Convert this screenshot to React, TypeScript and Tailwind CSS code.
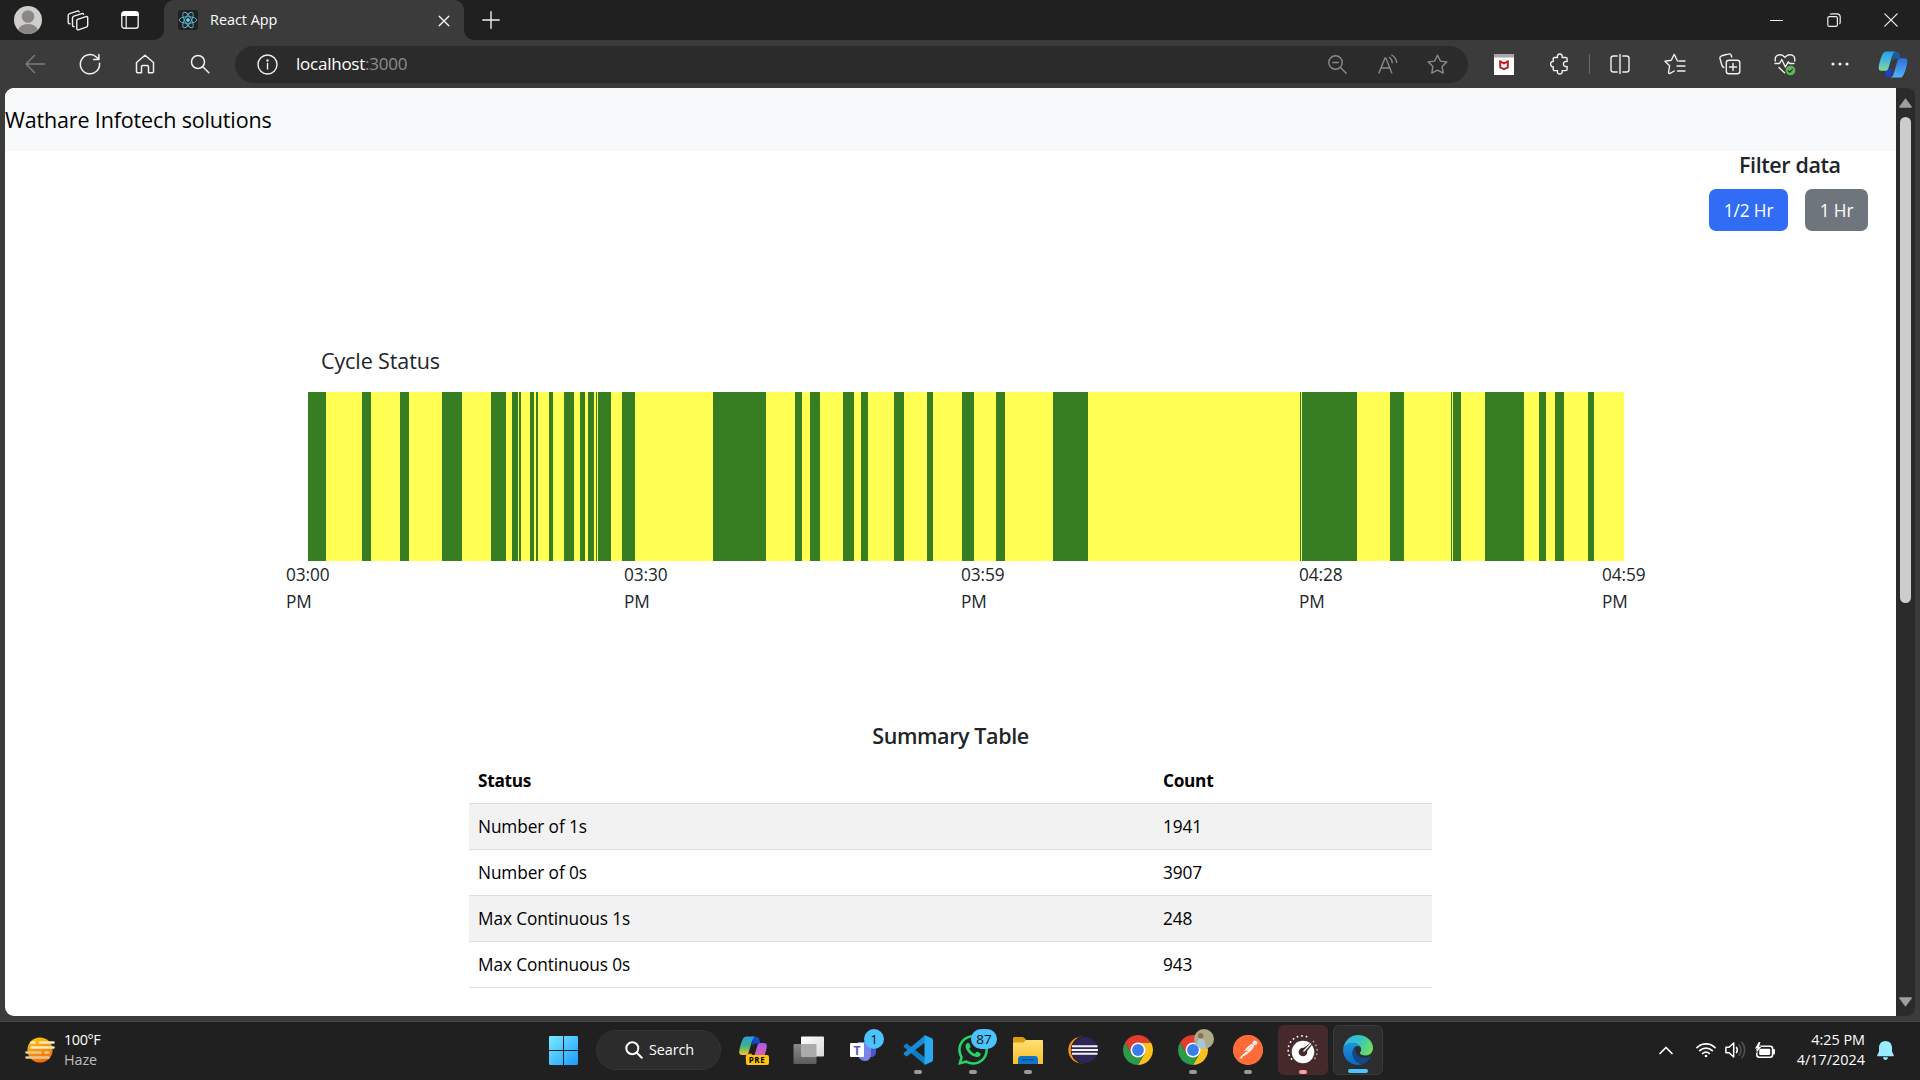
import { type ReactNode } from "react";
import { SiPostman, SiWhatsapp } from "react-icons/si";

const runs: [number, number][] = [
  [308, 326], [362, 371], [400, 409], [442, 462], [491, 506], [512, 518], [519, 521], [530, 534],
  [536, 538], [549, 553], [564, 574], [580, 585], [588, 594], [596, 597], [598, 611], [622, 635],
  [713, 766], [795, 802], [810, 820], [843, 854], [861, 868], [894, 904], [927, 933], [962, 974],
  [996, 1005], [1053, 1088], [1300, 1301], [1302, 1357], [1390, 1404], [1451, 1452], [1453, 1461],
  [1485, 1524], [1539, 1546], [1555, 1564], [1588, 1594],
];
const START = 308;
const END = 1624;

const summary = [
  ["Number of 1s", "1941"],
  ["Number of 0s", "3907"],
  ["Max Continuous 1s", "248"],
  ["Max Continuous 0s", "943"],
];

function T({ children, className = "" }: { children: ReactNode; className?: string }) {
  return <span className={`inline-block whitespace-nowrap ${className}`}>{children}</span>;
}

function Line({ children, w = 22, h = w, sw = 1.4, c = "#f0f0f0" }: { children: ReactNode; w?: number; h?: number; sw?: number; c?: string }) {
  return (
    <svg width={w} height={h} viewBox={`0 0 ${w} ${h}`} fill="none" stroke={c} strokeWidth={sw} strokeLinecap="round" strokeLinejoin="round" className="block shrink-0">
      {children}
    </svg>
  );
}

function ToolSlot({ children }: { children: ReactNode }) {
  return <div className="flex h-full w-[55px] shrink-0 items-center justify-center">{children}</div>;
}

function CopilotMark({ w, h, a = "c" }: { w: number; h: number; a?: string }) {
  const warm = a === "w";
  return (
    <svg width={w} height={h} viewBox="0 0 30 28" className="block shrink-0">
      <defs>
        <linearGradient id={`${a}1`} x1="0" y1="0" x2="0" y2="1">
          <stop offset="0" stopColor="#2b9fe6" />
          <stop offset=".5" stopColor={warm ? "#3bb28a" : "#4cb8d8"} />
          <stop offset="1" stopColor={warm ? "#f5c928" : "#7fdc8e"} />
        </linearGradient>
        <linearGradient id={`${a}2`} x1="0" y1="0" x2="0" y2="1">
          <stop offset="0" stopColor={warm ? "#a45cf0" : "#2f6fdc"} />
          <stop offset="1" stopColor={warm ? "#f5668b" : "#4fb4fb"} />
        </linearGradient>
      </defs>
      <path d="M14 1h5c2 0 2.600 1.500 3.200 3.500L23 8h-5c-2 0-3 1-3.500 3z" fill={warm ? "#1748c8" : "#1d5c9c"} />
      <path d="M8 19h6l-1 5c-.5 2-1 3.500-3 3.500-2 0-2.500-2-3-4z" fill={warm ? "#f0a51e" : "#1c3fd8"} />
      <path d="M8 .5h10c-2.500.5-3.300 2.500-4 5l-3.500 11.500C9.800 19.500 9 20.500 6.500 20.500H3c-2.500 0-3.300-2-2.700-5C1 11 2.500 6.500 4 3.500 5 1.500 6 .5 8 .5z" fill={`url(#${a}1)`} />
      <path d="M22 27.500H12c2.500-.5 3.300-2.500 4-5L19.500 11c.7-2.500 1.500-3.500 4-3.500H27c2.500 0 3.300 2 2.700 5-.7 4.500-2.200 9-3.700 12-1 2-2 3-4 3z" fill={`url(#${a}2)`} />
    </svg>
  );
}

function Chrome() {
  return (
    <svg width="30" height="30" viewBox="0 0 30 30" className="block">
      <path d="M27.990 7.500A15 15 0 0 1 15 30L21.500 18.750 15 7.500z" fill="#fcc21b" />
      <path d="M2.010 7.500A15 15 0 0 1 27.990 7.500H15L8.500 18.750z" fill="#e33b2e" />
      <path d="M2.010 7.500A15 15 0 0 0 15 30L21.500 18.750h-13z" fill="#2c9a48" />
      <circle cx="15" cy="15" r="7.500" fill="#fff" />
      <circle cx="15" cy="15" r="5.900" fill="#3b7ded" />
    </svg>
  );
}

function Edge() {
  return (
    <svg width="30" height="30" viewBox="0 0 30 30" className="block">
      <defs>
        <linearGradient id="eg1" x1="0" y1=".2" x2="1" y2=".6">
          <stop offset="0" stopColor="#2fb3ea" />
          <stop offset=".5" stopColor="#35c3c4" />
          <stop offset="1" stopColor="#6fe05a" />
        </linearGradient>
        <linearGradient id="eg2" x1="0" y1="0" x2="0" y2="1">
          <stop offset="0" stopColor="#1b95e0" />
          <stop offset="1" stopColor="#0f66bd" />
        </linearGradient>
      </defs>
      <path d="M0 14C1.500 5.500 7.500 0 15 0c8.500 0 15 6 15 13 0 4.500-3.300 7.500-7.500 7.500-3.500 0-5.500-1.200-5.500-2.500 0-1 1.200-1.500 1.200-3.500 0-3.500-3.700-6.500-8.700-6.500C5 8 1.500 10.500 0 14z" fill="url(#eg1)" />
      <path d="M0 14.500C1.200 10.500 5 8 9.500 8c5 0 8.700 3 8.700 6 0-1.700-1.500-3-3.500-3-3 0-5.200 3-5.200 7 0 6 4.500 10.500 10 11-1.500.6-3 1-4.500 1C6.500 30 0 23 0 14.500z" fill="url(#eg2)" />
      <path d="M12 12c-1.500 1.200-2.500 3.400-2.500 6 0 6 4.700 10.500 10.500 10.900 3.500-1.400 6-3.700 7.800-6.600.3-.6-.2-1-.8-.7-1.500.8-3 1.200-5 1.200-5.500 0-10-3.500-10-7.800 0-1.200.300-2.200 0-3z" fill="#114a8b" />
    </svg>
  );
}

function TaskSlot({ children, mark, tile = "" }: { children: ReactNode; mark?: string; tile?: string }) {
  return (
    <div className="flex w-[55px] shrink-0 justify-center">
      <div className={`relative flex h-[50px] w-[50px] items-center justify-center rounded-md ${tile}`}>
        {children}
        {mark && <div className={`absolute bottom-px h-1 rounded-full ${mark}`} />}
      </div>
    </div>
  );
}

function TabStrip() {
  return (
    <div className="flex h-10 bg-[#202020]">
      <div className="flex w-[152px] items-center pl-[14px]">
        <svg width="28" height="28" viewBox="0 0 28 28" className="block">
          <clipPath id="av"><circle cx="14" cy="14" r="14" /></clipPath>
          <g clipPath="url(#av)">
            <rect width="28" height="28" fill="#d0ceca" />
            <circle cx="14" cy="10.500" r="6.300" fill="#8a8886" />
            <ellipse cx="14" cy="25" rx="10" ry="7" fill="#8a8886" />
          </g>
        </svg>
        <div className="ml-[25px]">
          <Line w={22} h={21} sw={1.400}>
            <path d="M10.500 9.300 19 6.600c1-.3 1.700.1 1.700 1.200v7.400c0 1-.4 1.600-1.400 1.900L12 19.700c-1.200.4-2.200 0-2.200-1.300v-8c0-.6.2-.9.7-1.100z" />
            <path d="M7.200 16.600c-1.200.1-1.700-.5-1.700-1.500V8c0-1 .5-1.600 1.400-1.900l8-2.500c.9-.3 1.400 0 1.600.8" />
            <path d="M3 13.700c-1.200.1-1.800-.5-1.800-1.500V5.500c0-1 .5-1.600 1.400-1.900l7.800-2.500c1-.3 1.500 0 1.700.8" />
          </Line>
        </div>
        <svg width="18" height="18" viewBox="0 0 18 18" className="ml-8 block">
          <rect x=".8" y=".8" width="16.400" height="16.400" rx="2.500" fill="none" stroke="#e8e8e8" strokeWidth="1.400" />
          <path d="M.5 5V3A2.500 2.500 0 0 1 3 .5h12A2.500 2.500 0 0 1 17.500 3v2z" fill="#fff" />
          <path d="M5.200 5v12" stroke="#e8e8e8" strokeWidth="1.300" />
        </svg>
      </div>
      <div className="flex w-3 items-end bg-[#3b3b3b]"><div className="h-10 w-3 rounded-br-[10px] bg-[#202020]" /></div>
      <div className="flex w-[300px] bg-[#202020]">
        <div className="flex w-full items-center rounded-t-[10px] bg-[#3b3b3b] pl-[14px]">
          <div className="flex h-5 w-5 items-center justify-center rounded-[3px] bg-[#202020]">
            <svg width="20" height="20" viewBox="0 0 20 20" fill="none" stroke="#5fb9d6" strokeWidth=".9" className="block">
              <ellipse cx="10" cy="10" rx="8.800" ry="3.300" />
              <ellipse cx="10" cy="10" rx="8.800" ry="3.300" transform="rotate(60 10 10)" />
              <ellipse cx="10" cy="10" rx="8.800" ry="3.300" transform="rotate(120 10 10)" />
              <circle cx="10" cy="10" r="1.500" fill="#7fd8f5" />
            </svg>
          </div>
          <T className="ml-3 text-[14.400px] text-white">React App</T>
          <div className="mt-px mr-[14px] ml-auto">
            <Line w={12} sw={1.400}><path d="M1.200 1.200l9.600 9.600M10.800 1.200l-9.600 9.600" /></Line>
          </div>
        </div>
      </div>
      <div className="flex w-3 items-end bg-[#3b3b3b]"><div className="h-10 w-3 rounded-bl-[10px] bg-[#202020]" /></div>
      <div className="ml-[6px] flex items-center">
        <Line w={18} sw={1.400}><path d="M9 .8v16.400M.8 9h16.400" /></Line>
      </div>
      <div className="ml-auto flex items-center">
        <div className="flex w-[57px] justify-center"><div className="h-px w-[13px] bg-white" /></div>
        <div className="flex w-[57px] justify-center">
          <Line w={14} sw={1.200}><path d="M.8 5.200c0-1 .5-1.600 1.500-1.600h6.500c1 0 1.600.6 1.600 1.600v6.600c0 1-.6 1.600-1.600 1.600H2.300c-1 0-1.500-.6-1.500-1.600zM3.400 1.200C3.800.8 4.300.8 5 .8h5c2.200 0 3.200 1 3.200 3.200v5c0 .8 0 1.300-.4 1.700" /></Line>
        </div>
        <div className="flex w-[58px] justify-center">
          <Line w={14} sw={1.200}><path d="M.8.8l12.400 12.400M13.200.8.8 13.200" /></Line>
        </div>
      </div>
    </div>
  );
}

function Toolbar() {
  return (
    <div className="flex h-12 items-center bg-[#3b3b3b] pl-[7px]">
      <ToolSlot><Line w={20} c="#7f7f7f"><path d="M19.300 10H1M9.500 1.500 1 10l8.500 8.500" /></Line></ToolSlot>
      <ToolSlot><Line w={22} sw={1.500}><path d="M20.500 10.200A9.600 9.600 0 1 1 17.600 4.300L19.800 6.400M19.900 1.500v5.100h-5.200" /></Line></ToolSlot>
      <ToolSlot><Line w={20} sw={1.500}><path d="M1.500 8.500 10 1.200l8.500 7.300v9.300c0 .6-.4 1-1 1h-4v-6c0-.8-.4-1.200-1.200-1.200H7.700c-.8 0-1.200.4-1.200 1.200v6h-4c-.6 0-1-.4-1-1z" /></Line></ToolSlot>
      <ToolSlot><Line w={20} sw={1.500}><circle cx="8" cy="8" r="6.500" /><path d="M12.800 12.800l6 6" /></Line></ToolSlot>
      <div className="ml-2 flex h-[37px] w-[1233px] items-center rounded-full bg-[#2b2b2b] pl-[22px]">
        <Line w={21} sw={1.400}><circle cx="10.500" cy="10.500" r="9.500" /><path d="M10.500 9.500v5.500" /><circle cx="10.500" cy="6.500" r=".5" fill="#f0f0f0" /></Line>
        <T className="-mt-px ml-[18px] text-[17px] tracking-[-0.24px] text-[#8d8d8d]"><span className="text-white">localhost</span>:3000</T>
        <div className="ml-auto flex w-[156px] items-center">
          <div className="flex w-[50px] justify-center"><Line w={19} c="#8a8a8a"><circle cx="7.500" cy="7.500" r="6.700" /><path d="M12.500 12.500l5.700 5.700M4.800 7.500h5.400" /></Line></div>
          <div className="flex w-[51px] justify-center"><Line w={20} c="#8a8a8a"><path d="M1 19 7 4h.8l6 15M3 14h9M11.500 3.500c1.700 1.200 2.700 3 2.700 5.200M13.800 1c2.700 1.500 4.300 4 4.800 7.500" /></Line></div>
          <div className="flex w-[49px] justify-center"><Line w={21} c="#8a8a8a"><path d="M10.500 1.200l2.900 5.900 6.400.9-4.700 4.600 1.100 6.500-5.700-3-5.700 3 1.100-6.500L1.200 8l6.400-.9z" /></Line></div>
        </div>
      </div>
      <div className="ml-[9px] flex h-full items-center">
        <ToolSlot>
          <svg width="20" height="21" viewBox="0 0 20 21" className="mr-px block">
            <rect width="20" height="21" fill="#fff" /><rect width="20" height="3.500" fill="#a8a8a8" />
            <path d="M6.200 7.300 10 9.300l3.800-2v6L10 15.200l-3.800-1.900z" fill="none" stroke="#c0201f" strokeWidth="2" />
          </svg>
        </ToolSlot>
        <ToolSlot><Line w={20} h={22} sw={1.400}><path d="M4.500 4.500h3c-.6-2 .6-3.500 2.300-3.500s2.900 1.500 2.300 3.500h3.700c.8 0 1.300.5 1.300 1.300v2.700c-2-.5-3.700.7-3.700 2.500s1.700 3 3.700 2.500v2.800c0 .8-.5 1.300-1.300 1.300h-3.700c.6 2-.6 3.400-2.300 3.400s-2.900-1.400-2.300-3.400h-3c-.8 0-1.300-.5-1.300-1.300v-2.700c-2 .3-2.500-1-2.500-2.600s.7-2.700 2.500-2.500V5.800c0-.8.5-1.300 1.300-1.300z" /></Line></ToolSlot>
        <div className="mx-[2px] h-5 w-px bg-[#6a6a6a]" />
        <ToolSlot><Line w={20} h={22} sw={1.400}><path d="M7.200 3H3.300C2 3 1 4 1 5.300v11.400C1 18 2 19 3.300 19h3.900M10 1.500v19M12.800 3h3.900C18 3 19 4 19 5.300v11.400c0 1.300-1 2.300-2.300 2.300h-3.900" /></Line></ToolSlot>
        <ToolSlot><Line w={22} sw={1.400}><path d="M13.500 8 10.200 1.300 7.300 7.300 1 8.300l4.600 4.500L4.500 19.500c.1 1 .8 1.200 1.500.8l4.300-2.300M15 8h6M13 13h8M13.500 18H21" /></Line></ToolSlot>
        <ToolSlot><Line w={22} sw={1.400}><rect x="7.300" y="7.300" width="13.500" height="13.500" rx="2.500" /><path d="M14 10.500v7M10.500 14h7M4.800 14.500C3.500 14 3.200 13.500 2.800 12L1 5.500C.7 4 1.200 3.200 2.600 2.800L9.500 1c1.400-.4 2.400.2 2.800 1.500l.4 1.500" /></Line></ToolSlot>
        <ToolSlot>
          <Line w={22} h={24} sw={1.400}>
            <path d="M1.300 9C.5 4.500 3 2.800 6 2.800c2.200 0 3.700 1 4.900 2.600C12.200 3.800 13.600 2.800 16 2.800c3 0 5.400 1.700 4.700 6.200M5 15.500l5.500 5.200" />
            <path d="M1 11.500h4.500l2.300-4 3.500 7.500 3-5.200 1.200 1.700H20" />
            <circle cx="16.500" cy="18.500" r="4.800" fill="#62b557" stroke="none" />
            <path d="M14.300 18.700l1.600 1.500 2.700-3" stroke="#1d3d1a" strokeWidth="1.200" />
          </Line>
        </ToolSlot>
        <ToolSlot><svg width="18" height="4" viewBox="0 0 18 4" fill="#f0f0f0" className="block"><circle cx="2" cy="2" r="1.600" /><circle cx="9" cy="2" r="1.600" /><circle cx="16" cy="2" r="1.600" /></svg></ToolSlot>
        <div className="flex w-[51px] justify-center"><CopilotMark w={30} h={27} /></div>
      </div>
    </div>
  );
}

function TimeLabel({ t }: { t: string }) {
  return <div className="w-[43px] text-[17.250px] leading-[27px] tracking-[-0.1px] text-[#212529]"><T>{t}</T><br /><T>PM</T></div>;
}

function Page() {
  return (
    <div className="h-full w-[1891px] overflow-hidden rounded-l-[9px] bg-white">
      <div className="flex h-[63px] items-center bg-[#f8f9fb] pt-[2px] text-[21.500px] tracking-[-0.15px] text-black"><T>Wathare Infotech solutions</T></div>
      <div className="flex h-[80px] justify-end pr-7">
        <div className="flex w-[159px] flex-col">
          <div className="flex h-[38px] pl-[30px] text-[21.500px] leading-[27px] font-semibold tracking-[-0.4px] text-[#212529]"><T>Filter data</T></div>
          <div className="flex justify-between text-[17.250px] tracking-[-0.1px] text-white">
            <div className="flex h-[42px] w-[79px] items-center justify-center rounded-[7px] bg-[#316cf4] pt-[2px]"><T>1/2 Hr</T></div>
            <div className="flex h-[42px] w-[63px] items-center justify-center rounded-[7px] bg-[#6e757c] pt-[2px]"><T>1 Hr</T></div>
          </div>
        </div>
      </div>
      <div className="mt-[116px] flex h-[45px] pl-[316px] text-[21.500px] leading-[27px] tracking-[-0.1px] text-[#212529]"><T>Cycle Status</T></div>
      <div className="ml-[303px] h-[169px] w-[1316px]">
        <svg width={END - START} height="169" viewBox={`${START} 0 ${END - START} 169`} shapeRendering="crispEdges" className="block">
          <rect x={START} width={END - START} height="169" fill="#ffff54" />
          {runs.map(([a, b]) => <rect key={a} x={a} width={b - a} height="169" fill="#377d22" />)}
        </svg>
      </div>
      <div className="ml-[281px] flex">
        <div className="w-[338px]"><TimeLabel t="03:00" /></div>
        <div className="w-[337px]"><TimeLabel t="03:30" /></div>
        <div className="w-[338px]"><TimeLabel t="03:59" /></div>
        <div className="w-[303px]"><TimeLabel t="04:28" /></div>
        <div><TimeLabel t="04:59" /></div>
      </div>
      <div className="mt-[107px] ml-[464px] w-[963px]">
        <div className="flex h-[36px] justify-center text-[21.500px] leading-[27px] font-semibold tracking-[-0.4px] text-[#212529]"><T>Summary Table</T></div>
        <div className="flex h-[46px] items-center border-b border-[#dfdfdf] pl-[9px] text-[17.250px] font-bold tracking-[-0.3px] text-black">
          <div className="w-[685px]"><T>Status</T></div><T>Count</T>
        </div>
        {summary.map(([k, v], i) => (
          <div key={k} className={`flex h-[46px] items-center border-b border-[#dfdfdf] pl-[9px] text-[17.250px] tracking-[-0.1px] text-black ${i % 2 ? "bg-white" : "bg-[#f2f2f2]"}`}>
            <div className="w-[685px]"><T>{k}</T></div><T>{v}</T>
          </div>
        ))}
      </div>
    </div>
  );
}

function Scrollbar() {
  return (
    <div className="flex w-[19px] flex-col items-center rounded-r-[8px] bg-[#2b2b2b]">
      <svg width="13" height="10" viewBox="0 0 13 10" className="mt-[10px] block" fill="#9f9f9f"><path d="M6.500.3 12.700 8.500c.2.800-.2 1.300-.8 1.300H1.100c-.6 0-1-.5-.8-1.300z" /></svg>
      <div className="mt-[9px] h-[486px] w-[11px] rounded-full bg-[#cdcdcd]" />
      <svg width="13" height="10" viewBox="0 0 13 10" className="mt-auto mb-[9px] block" fill="#9f9f9f"><path d="M6.500 9.800.3 1.500C.1.700.5.200 1.100.2h10.800c.6 0 1 .5.8 1.300z" /></svg>
    </div>
  );
}

const dot = "w-2 bg-[#9a9a9a]";

function Taskbar() {
  return (
    <div className="flex h-[59px] shrink-0 items-center border-t border-[#454545] bg-[#202020] pb-[2px]">
      <div className="flex w-[536px] items-center pl-[25px]">
        <svg width="30" height="26" viewBox="0 0 30 26" className="block">
          <defs><linearGradient id="sun" x1=".2" y1="0" x2=".6" y2="1"><stop offset="0" stopColor="#fdc50d" /><stop offset="1" stopColor="#ee6a0d" /></linearGradient></defs>
          <circle cx="15" cy="13" r="12.600" fill="url(#sun)" />
          <g strokeLinecap="round" strokeWidth="2.600">
            <path d="M6.500 5.500h3M15 5.500h13.500M6.500 10.500h22" stroke="#fbeac4" />
            <path d="M1.500 15.500h14M20.500 15.500h3M1.500 20.500h22" stroke="#e9c893" />
          </g>
        </svg>
        <div className="-mt-px ml-[9px] flex flex-col text-[14.400px] leading-5">
          <T className="tracking-[-0.4px] text-white">100°F</T><T className="tracking-[-0.1px] text-[#bdbdbd]">Haze</T>
        </div>
      </div>
      <TaskSlot>
        <svg width="29" height="29" viewBox="0 0 29 29" className="block">
          <defs><linearGradient id="win" x1="0" y1="0" x2="1" y2="1"><stop offset="0" stopColor="#7beaff" /><stop offset="1" stopColor="#1a9bff" /></linearGradient></defs>
          <path d="M0 1.200C0 .5.500 0 1.200 0H14v14H0zM15 0h12.800c.7 0 1.200.5 1.200 1.200V14H15zM0 15h14v14H1.200C.5 29 0 28.500 0 27.800zM15 15h14v12.800c0 .7-.5 1.200-1.200 1.200H15z" fill="url(#win)" />
        </svg>
      </TaskSlot>
      <div className="mr-[4.500px] ml-[5px] flex h-10 w-[125px] items-center rounded-full border border-[#343434] bg-[#2c2c2c] pl-7">
        <Line w={18} sw={2} c="#fff"><circle cx="7.300" cy="7.300" r="6" /><path d="M11.800 11.800l5 5" /></Line>
        <T className="ml-1.5 text-[14.400px] tracking-[-0.1px] text-white">Search</T>
      </div>
      <TaskSlot>
        <div className="relative -mt-px h-[28px] w-[29px]">
          <CopilotMark w={28} h={26} a="w" />
          <div className="absolute top-[19px] left-[7px] flex h-[10px] w-[23px] items-center justify-center rounded-[2px] bg-[#fcc40f] text-[8px] font-bold tracking-[.5px] text-black">PRE</div>
        </div>
      </TaskSlot>
      <TaskSlot>
        <svg width="31" height="29" viewBox="0 0 31 29" className="block">
          <defs>
            <linearGradient id="tv" x1="0" y1="0" x2="1" y2="1"><stop offset="0" stopColor="#fff" /><stop offset="1" stopColor="#d8d8d8" /></linearGradient>
            <linearGradient id="tg" x1="0" y1="0" x2="0" y2="1"><stop offset="0" stopColor="#8a8a8a" /><stop offset="1" stopColor="#5c5c5c" /></linearGradient>
          </defs>
          <rect x=".5" y="8" width="23" height="20" rx="1" fill="url(#tg)" />
          <rect x="8" y=".5" width="23" height="20" rx="1" fill="url(#tv)" />
          <path d="M8 8h15.500v12.500H8z" fill="#ababab" />
        </svg>
      </TaskSlot>
      <TaskSlot>
        <svg width="36" height="34" viewBox="0 0 36 34" className="absolute top-1 left-[11px] block" fontFamily="Open Sans, sans-serif">
          <path d="M17 14h10v9c0 3-2 5-5 5-5 0-9-3-9-8z" fill="#4f56c4" />
          <path d="M8 12h13v12c0 4-2 7-6 7s-7-3-7-7z" fill="#7b83eb" transform="translate(1 1)" />
          <rect x="1" y="14" width="14" height="14" rx="1" fill="#fff" />
          <text x="8" y="25.500" textAnchor="middle" fontSize="12" fontWeight="bold" fill="#5059c9">T</text>
          <circle cx="25" cy="10" r="10" fill="#4cc2ff" />
          <text x="25" y="14.800" textAnchor="middle" fontSize="13.500" fill="#111">1</text>
        </svg>
      </TaskSlot>
      <TaskSlot mark={dot}>
        <svg width="30" height="30" viewBox="0 0 30 30" className="block">
          <path d="M1 10.500 2.800 8.900c.5-.4 1.100-.4 1.600 0L22 22.500v7.300L1 12.200c-.5-.5-.5-1.200 0-1.700z" fill="#0f7cc4" />
          <path d="M1 19.500 2.800 21.100c.5.4 1.100.4 1.600 0L22 7.500V.2L1 17.800c-.5.5-.5 1.200 0 1.700z" fill="#1a8ad4" />
          <path d="M21.500 0 28.800 3.300c.8.400 1.200 1 1.200 1.800v19.800c0 .8-.4 1.400-1.200 1.800L21.500 30z" fill="#2ba8f2" />
        </svg>
      </TaskSlot>
      <TaskSlot mark={dot}>
        <SiWhatsapp size={30} color="#25d366" />
        <div className="absolute top-[4px] left-[23px] flex h-5 w-[26px] items-center justify-center rounded-full bg-[#4cc2ff] text-[13.500px] text-[#111]">87</div>
      </TaskSlot>
      <TaskSlot mark={dot}>
        <svg width="30" height="27" viewBox="0 0 30 27" className="block">
          <defs><linearGradient id="fo" x1="0" y1="0" x2="0" y2="1"><stop offset="0" stopColor="#ffdf72" /><stop offset="1" stopColor="#f8bf2c" /></linearGradient></defs>
          <path d="M0 1.500C0 .6.6 0 1.500 0h8c.6 0 1 .2 1.500.7L13.500 3H28v7H0z" fill="#dd9d10" />
          <path d="M0 5.500h10.500L13 3h16c.6 0 1 .4 1 1v23H0z" fill="url(#fo)" />
          <path d="M5 27v-5c0-1.800 1.200-3 3-3h14c1.800 0 3 1.200 3 3v5z" fill="#1173c7" />
          <path d="M9 22.700h12.500" stroke="#0b4d8c" strokeWidth="1.200" />
        </svg>
      </TaskSlot>
      <TaskSlot>
        <svg width="30" height="28" viewBox="0 0 30 28" className="block">
          <path d="M14.500.5C6 .5.300 6.500.3 14s5.700 13.500 14.200 13.500z" fill="#f7941e" />
          <circle cx="17" cy="14" r="14.200" fill="#202020" />
          <circle cx="16.800" cy="14" r="13" fill="#2f2657" />
          <path d="M4 10.300h25.500M3.500 14h26.500M4 17.700h25.500" stroke="#f3f2f8" strokeWidth="1.900" />
        </svg>
      </TaskSlot>
      <TaskSlot><Chrome /></TaskSlot>
      <TaskSlot mark={dot}>
        <Chrome />
        <svg width="20" height="20" viewBox="0 0 20 20" className="absolute top-[4px] left-[26px] block">
          <circle cx="10" cy="10" r="10" fill="#aeab88" />
          <path d="M2.500 16.500C3 12 4 9.500 7 9.500s4.500 3 5 9.800C8 20.500 4.500 19 2.500 16.500z" fill="#a9c6d4" />
          <circle cx="6.700" cy="6.700" r="2.700" fill="#9a6a4c" />
        </svg>
      </TaskSlot>
      <TaskSlot mark={dot}>
        <div className="flex h-[30px] w-[30px] items-center justify-center overflow-hidden rounded-full bg-[radial-gradient(circle,#fff_60%,#ff6c37_62%)]"><SiPostman size={30} color="#ff6c37" /></div>
      </TaskSlot>
      <TaskSlot mark="w-2 bg-[#ff99a4]" tile="bg-[#462a2b]">
        <svg width="32" height="30" viewBox="0 0 32 30" className="block">
          <g fill="none" strokeWidth="1.800" strokeLinecap="round" strokeDasharray="0.100 4.400">
            <path d="M4.500 24A14 14 0 0 1 22.500 3" stroke="#fff" />
            <path d="M26.500 6.500A14 14 0 0 1 27.500 24" stroke="#b3a3a3" />
          </g>
          <circle cx="16" cy="17" r="11.300" fill="#fff" />
          <circle cx="16" cy="17" r="4.300" fill="#462a2b" />
          <path d="M16 13.500 24.500 7 26 8.500 19.500 17z" fill="#462a2b" />
          <path d="M16.500 16.500 24 8.500" stroke="#fff" strokeWidth="1.200" />
        </svg>
      </TaskSlot>
      <TaskSlot mark="w-5 bg-[#4cc2ff]" tile="border border-[#3a3a3a] bg-[#2d2d2d]"><Edge /></TaskSlot>
      <div className="ml-auto flex items-center pr-[26px]">
        <Line w={14} h={9} sw={1.700} c="#fff"><path d="M1 7.500l6-6 6 6" /></Line>
        <div className="ml-[23px]">
          <svg width="20" height="16" viewBox="0 0 20 16" fill="none" stroke="#fff" strokeWidth="1.700" strokeLinecap="round" className="block">
            <path d="M1 5.700a12.700 12.700 0 0 1 18 0M3.800 8.700a8.800 8.800 0 0 1 12.400 0M6.600 11.500a4.800 4.800 0 0 1 6.800 0" />
            <circle cx="10" cy="14" r="1.300" fill="#fff" stroke="none" />
          </svg>
        </div>
        <svg width="21" height="18" viewBox="0 0 21 18" fill="none" strokeWidth="1.500" strokeLinecap="round" strokeLinejoin="round" className="ml-[9px] block">
          <path d="M.9 6.200h3.200L8.700 2v14l-4.600-4.200H.9z" stroke="#fff" />
          <path d="M11.500 6.300c1 1.600 1 3.800 0 5.400" stroke="#fff" />
          <path d="M14.200 3.700c2.300 3 2.300 7.600 0 10.600M17 1.200c3.500 4.500 3.500 11.100 0 15.600" stroke="#555" />
        </svg>
        <svg width="21" height="17" viewBox="0 0 21 17" className="ml-[9px] block">
          <rect x="1.800" y="4.300" width="15.800" height="11" rx="2.500" fill="none" stroke="#fff" strokeWidth="1.600" />
          <rect x="4.200" y="6.700" width="11" height="6.300" rx="1" fill="#fff" />
          <path d="M19 8v3.500" stroke="#fff" strokeWidth="2" strokeLinecap="round" />
          <path d="M3.800 0 0 6.500h2.500L1.200 11l5-6H4l1.500-5z" fill="#fff" stroke="#202020" strokeWidth="1" paintOrder="stroke" />
        </svg>
        <div className="-mt-px ml-5 flex w-[69px] flex-col items-end text-[14.400px] leading-5 text-white"><T>4:25 PM</T><T>4/17/2024</T></div>
        <svg width="17" height="19" viewBox="0 0 17 19" className="ml-3 block" fill="#99ebff"><path d="M8.500 0c3.800 0 6.500 2.800 6.500 6.500v4l1.700 3.500c.3.700-.1 1.300-.9 1.300H1.200c-.8 0-1.200-.6-.9-1.300L2 10.500v-4C2 2.800 4.700 0 8.500 0zM6 16.200h5C10.700 18 9.800 19 8.500 19S6.300 18 6 16.200z" /></svg>
      </div>
    </div>
  );
}

export default function App() {
  return (
    <div className="flex h-[1080px] w-[1920px] flex-col overflow-hidden bg-[#3b3b3b] font-['Open_Sans','Noto_Sans',sans-serif]">
      <TabStrip />
      <Toolbar />
      <div className="flex h-[928px] shrink-0 pl-[5px]"><Page /><Scrollbar /></div>
      <div className="h-[5px] shrink-0" />
      <Taskbar />
    </div>
  );
}
